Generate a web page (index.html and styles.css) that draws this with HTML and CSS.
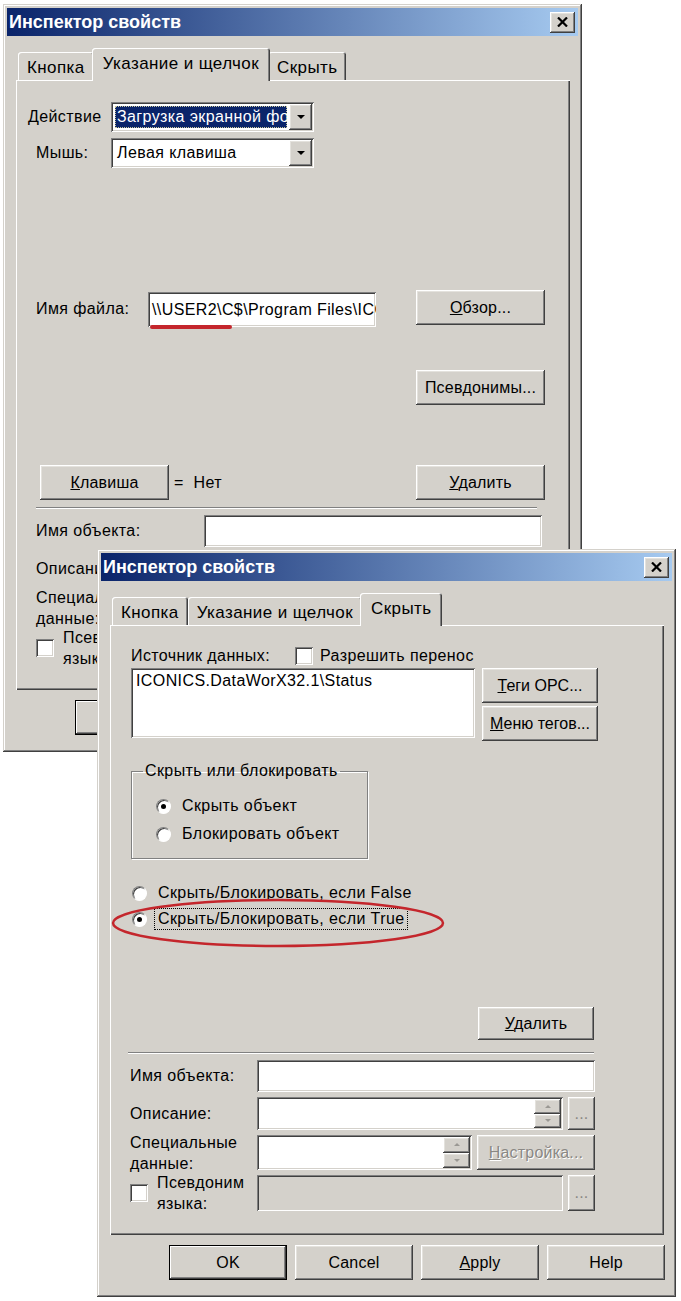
FILE: index.html
```html
<!DOCTYPE html>
<html lang="ru">
<head>
    <meta charset="utf-8">
    <title>Инспектор свойств</title>
    <link rel="stylesheet" href="styles.css">
</head>
<body>
<div class="desktop">

    <div class="window window-back">
        <div class="titlebar">
            <span class="title">Инспектор свойств</span>
            <span class="close-btn"><svg width="11" height="10" viewBox="0 0 11 10"><path d="M1 0.5 L10 9.5 M10 0.5 L1 9.5" stroke="#000" stroke-width="2.2"/></svg></span>
        </div>
        <div class="tabs">
            <span class="tab">Кнопка</span>
            <span class="tab active">Указание и щелчок</span>
            <span class="tab">Скрыть</span>
        </div>
        <div class="panel">
            <div class="page page-click">
                <div class="row row-combo">
                    <span class="label">Действие</span>
                    <div class="field combo">
                        <span class="combo-text selected">Загрузка экранной формы</span>
                        <span class="combo-btn"><span class="arrow-down"></span></span>
                    </div>
                </div>
                <div class="row row-combo row-mouse">
                    <span class="label">Мышь:</span>
                    <div class="field combo">
                        <span class="combo-text">Левая клавиша</span>
                        <span class="combo-btn"><span class="arrow-down"></span></span>
                    </div>
                </div>
                <div class="row row-file">
                    <span class="label">Имя файла:</span>
                    <div class="field input-file">\\USER2\C$\Program Files\ICONICS</div>
                    <button class="btn btn-wide btn-browse"><u>О</u>бзор...</button>
                </div>
                <div class="row row-aliases">
                    <button class="btn btn-wide">Псевдонимы...</button>
                </div>
                <div class="row row-key">
                    <button class="btn btn-wide"><u>К</u>лавиша</button>
                    <span class="key-value">=&nbsp;&nbsp;Нет</span>
                    <button class="btn btn-wide btn-push"><u>У</u>далить</button>
                </div>
            </div>
            <div class="separator"></div>
            <div class="common">
                <span class="label">Имя объекта:</span>
                <div class="field"></div>

                <span class="label">Описание:</span>
                <div class="field-group">
                    <div class="field spin-field">
                        <span class="spinner">
                            <span class="spin-btn"><span class="arrow-tiny-up"></span></span>
                            <span class="spin-btn"><span class="arrow-tiny-down"></span></span>
                        </span>
                    </div>
                    <button class="btn btn-dots">...</button>
                </div>

                <span class="label two-lines">Специальные<br>данные:</span>
                <div class="field-group">
                    <div class="field spin-field field-short">
                        <span class="spinner">
                            <span class="spin-btn"><span class="arrow-tiny-up"></span></span>
                            <span class="spin-btn"><span class="arrow-tiny-down"></span></span>
                        </span>
                    </div>
                    <button class="btn btn-setup" disabled><u>Н</u>астройка...</button>
                </div>

                <label class="label two-lines check-label"><span class="checkbox"></span><span>Псевдоним<br>языка:</span></label>
                <div class="field-group">
                    <div class="field field-disabled"></div>
                    <button class="btn btn-dots">...</button>
                </div>
            </div>
        </div>
        <div class="footer">
            <button class="btn btn-footer btn-default">OK</button>
            <button class="btn btn-footer">Cancel</button>
            <button class="btn btn-footer"><u>A</u>pply</button>
            <button class="btn btn-footer">Help</button>
        </div>
    </div>

    <div class="window window-front">
        <div class="titlebar">
            <span class="title">Инспектор свойств</span>
            <span class="close-btn"><svg width="11" height="10" viewBox="0 0 11 10"><path d="M1 0.5 L10 9.5 M10 0.5 L1 9.5" stroke="#000" stroke-width="2.2"/></svg></span>
        </div>
        <div class="tabs">
            <span class="tab">Кнопка</span>
            <span class="tab">Указание и щелчок</span>
            <span class="tab active">Скрыть</span>
        </div>
        <div class="panel">
            <div class="page page-hide">
                <div class="row row-source">
                    <span class="label">Источник данных:</span>
                    <label class="check"><span class="checkbox"></span>Разрешить перенос</label>
                </div>
                <div class="row row-list">
                    <div class="field listbox">ICONICS.DataWorX32.1\Status</div>
                    <div class="stack">
                        <button class="btn btn-tag"><u>Т</u>еги OPC...</button>
                        <button class="btn btn-tag"><u>М</u>еню тегов...</button>
                    </div>
                </div>
                <fieldset class="group">
                    <legend>Скрыть или блокировать</legend>
                    <label class="option"><span class="radio checked"></span><span class="option-text">Скрыть объект</span></label>
                    <label class="option"><span class="radio"></span><span class="option-text">Блокировать объект</span></label>
                </fieldset>
                <div class="options">
                    <label class="option"><span class="radio"></span><span class="option-text">Скрыть/Блокировать, если False</span></label>
                    <label class="option"><span class="radio checked"></span><span class="option-text focus">Скрыть/Блокировать, если True</span></label>
                </div>
                <div class="row row-delete">
                    <button class="btn btn-del"><u>У</u>далить</button>
                </div>
            </div>
            <div class="separator"></div>
            <div class="common">
                <span class="label">Имя объекта:</span>
                <div class="field"></div>

                <span class="label">Описание:</span>
                <div class="field-group">
                    <div class="field spin-field">
                        <span class="spinner">
                            <span class="spin-btn"><span class="arrow-tiny-up"></span></span>
                            <span class="spin-btn"><span class="arrow-tiny-down"></span></span>
                        </span>
                    </div>
                    <button class="btn btn-dots">...</button>
                </div>

                <span class="label two-lines">Специальные<br>данные:</span>
                <div class="field-group">
                    <div class="field spin-field field-short">
                        <span class="spinner">
                            <span class="spin-btn"><span class="arrow-tiny-up"></span></span>
                            <span class="spin-btn"><span class="arrow-tiny-down"></span></span>
                        </span>
                    </div>
                    <button class="btn btn-setup" disabled><u>Н</u>астройка...</button>
                </div>

                <label class="label two-lines check-label"><span class="checkbox"></span><span>Псевдоним<br>языка:</span></label>
                <div class="field-group">
                    <div class="field field-disabled"></div>
                    <button class="btn btn-dots">...</button>
                </div>
            </div>
        </div>
        <div class="footer">
            <button class="btn btn-footer btn-default">OK</button>
            <button class="btn btn-footer">Cancel</button>
            <button class="btn btn-footer"><u>A</u>pply</button>
            <button class="btn btn-footer">Help</button>
        </div>
    </div>

    <span class="mark-underline"></span>
    <svg class="mark-ellipse" width="340" height="56" viewBox="0 0 340 56">
        <ellipse cx="170" cy="27" rx="165" ry="23" fill="none" stroke="#c4262c" stroke-width="2.5"/>
    </svg>

</div>
</body>
</html>
```

FILE: styles.css
```css
* {
    box-sizing: border-box;
    font-family: "Liberation Sans", Arial, sans-serif;
}

body {
    margin: 0;
    background-color: #ffffff;
    font-size: 16px;
    letter-spacing: 0.4px;
    color: #000000;
}

.desktop {
    position: relative;
    width: 681px;
    height: 1301px;
    overflow: hidden;
}

.window {
    position: absolute;
    width: 579px;
    height: 748px;
    padding: 4px;
    display: flex;
    flex-direction: column;
    background-color: #d4d1cb;
    box-shadow: inset -1px -1px #404040, inset 1px 1px #d4d1cb, inset -2px -2px #808080, inset 2px 2px #ffffff;
}

.window-back {
    left: 3px;
    top: 4px;
}

.window-front {
    left: 97px;
    top: 549px;
    z-index: 2;
}

.titlebar {
    flex: none;
    height: 28px;
    padding: 0 3px 0 2px;
    display: flex;
    align-items: center;
    justify-content: space-between;
    background: linear-gradient(90deg, #0a246a, #a6caf0);
}

.title {
    color: #ffffff;
    font-size: 18px;
    font-weight: bold;
    letter-spacing: 0;
}

.btn,
.close-btn,
.combo-btn,
.spin-btn {
    background-color: #d4d1cb;
    box-shadow: inset -1px -1px #404040, inset 1px 1px #ffffff, inset -2px -2px #808080, inset 2px 2px #e4e2dd;
}

.close-btn {
    width: 25px;
    height: 21px;
    display: flex;
    align-items: center;
    justify-content: center;
}

/* tabs */

.tabs {
    position: relative;
    z-index: 1;
    flex: none;
    height: 32px;
    margin: 12px 0 0 11px;
    display: flex;
    align-items: flex-end;
}

.tab {
    height: 28px;
    padding: 3px 9px 0;
    display: flex;
    align-items: center;
    white-space: nowrap;
    font-size: 17px;
    border-radius: 3px 3px 0 0;
    background-color: #d4d1cb;
    box-shadow: inset 1px 1px #ffffff, inset -1px 0 #404040, inset -2px 0 #808080;
}

.tab.active {
    position: relative;
    z-index: 1;
    height: 33px;
    margin: 0 -2px -1px;
    padding: 0 11px 2px;
}

.panel {
    flex: none;
    height: 610px;
    margin: 0 8px 0 9px;
    padding-top: 22px;
    display: flex;
    flex-direction: column;
    box-shadow: inset 1px 1px #ffffff, inset -1px -1px #404040, inset -2px -2px #808080;
}

.page {
    flex: none;
    height: 405px;
    display: flex;
    flex-direction: column;
}

.row {
    display: flex;
    align-items: center;
}

.label {
    white-space: nowrap;
}

/* fields */

.field {
    background-color: #ffffff;
    box-shadow: inset 1px 1px #808080, inset -1px -1px #ffffff, inset 2px 2px #404040, inset -2px -2px #d4d1cb;
}

.btn {
    border: none;
    padding: 0;
    font-size: 16px;
    letter-spacing: 0.2px;
    white-space: nowrap;
    color: #000000;
}

.btn:disabled {
    color: #8a8884;
    text-shadow: 1px 1px #ffffff;
}

.combo {
    width: 203px;
    height: 30px;
    padding: 2px;
    display: flex;
}

.combo-text {
    flex: 1;
    margin: 2px;
    padding-left: 2px;
    overflow: hidden;
    white-space: nowrap;
    line-height: 22px;
}

.combo-text.selected {
    background-color: #0a246a;
    color: #ffffff;
    outline: 1px dotted #c9c79a;
    outline-offset: -1px;
}

.combo-btn {
    width: 23px;
    display: flex;
    align-items: center;
    justify-content: center;
}

.arrow-down {
    border-left: 4px solid transparent;
    border-right: 4px solid transparent;
    border-top: 4px solid #000000;
}

.arrow-tiny-up {
    border-left: 3px solid transparent;
    border-right: 3px solid transparent;
    border-bottom: 3px solid #9a9893;
}

.arrow-tiny-down {
    border-left: 3px solid transparent;
    border-right: 3px solid transparent;
    border-top: 3px solid #9a9893;
}

.checkbox {
    flex: none;
    width: 18px;
    height: 18px;
    background-color: #ffffff;
    box-shadow: inset 1px 1px #808080, inset -1px -1px #ffffff, inset 2px 2px #404040, inset -2px -2px #d4d1cb;
}

.radio {
    position: relative;
    flex: none;
    width: 15px;
    height: 15px;
    border-radius: 50%;
    border: 1px solid;
    border-color: #808080 #ffffff #ffffff #808080;
    background-color: #ffffff;
    box-shadow: inset 1px 1px #404040;
}

.radio.checked::after {
    content: "";
    position: absolute;
    left: 4px;
    top: 4px;
    width: 5px;
    height: 5px;
    border-radius: 50%;
    background-color: #000000;
}

/* page "click" */

.row-combo {
    height: 30px;
    padding-left: 12px;
}

.row-combo .label {
    width: 83px;
}

.row-mouse {
    margin-top: 6px;
    padding-left: 20px;
}

.row-mouse .label {
    width: 75px;
}

.row-file {
    height: 37px;
    margin-top: 122px;
    padding-left: 20px;
}

.row-file .label {
    width: 112px;
}

.input-file {
    align-self: flex-end;
    width: 228px;
    height: 35px;
    padding: 0 4px;
    overflow: hidden;
    white-space: nowrap;
    line-height: 35px;
}

.btn-wide {
    width: 129px;
    height: 35px;
}

.btn-browse {
    align-self: flex-start;
    margin-left: 40px;
}

.row-aliases {
    margin-top: 43px;
    padding-right: 25px;
    justify-content: flex-end;
}

.row-key {
    margin-top: auto;
    margin-bottom: 7px;
    padding: 0 25px 0 24px;
}

.key-value {
    margin-left: 5px;
}

.btn-push {
    margin-left: auto;
}

/* page "hide" */

.row-source {
    height: 18px;
    padding-left: 21px;
}

.row-source .label {
    margin-right: 25px;
}

.check {
    display: flex;
    align-items: center;
    gap: 7px;
    white-space: nowrap;
}

.row-list {
    margin-top: 3px;
    padding-left: 21px;
    align-items: flex-start;
}

.listbox {
    width: 344px;
    height: 70px;
    padding: 4px 5px;
    white-space: nowrap;
}

.stack {
    margin-left: 7px;
    display: flex;
    flex-direction: column;
    gap: 3px;
}

.btn-tag {
    width: 116px;
    height: 35px;
    letter-spacing: 0;
}

.group {
    width: 237px;
    height: 98px;
    margin: 20px 0 0 21px;
    padding: 11px 0 0 11px;
    border: 1px solid #808080;
    box-shadow: inset 1px 1px #ffffff, 1px 1px #ffffff;
}

.group legend {
    padding: 0 2px;
    line-height: 20px;
}

.option {
    display: flex;
    align-items: center;
    gap: 8px;
    white-space: nowrap;
}

.option-text {
    padding: 1px 3px;
}

.option-text.focus {
    outline: 1px dotted #000000;
}

.group .option {
    height: 28px;
    padding-left: 13px;
}

.options {
    margin-top: 21px;
    padding-left: 22px;
}

.options .option {
    height: 26px;
}

.row-delete {
    margin-top: auto;
    margin-bottom: 12px;
    padding-right: 70px;
    justify-content: flex-end;
}

.btn-del {
    width: 116px;
    height: 33px;
}

/* common part */

.separator {
    flex: none;
    height: 2px;
    border-top: 1px solid #808080;
    border-bottom: 1px solid #ffffff;
}

.window-back .separator {
    margin: 0 33px 0 20px;
}

.window-front .separator {
    margin: 0 70px 0 18px;
}

.common {
    margin-top: 6px;
    padding-left: 20px;
    display: grid;
    grid-template-columns: 127px 338px;
    grid-template-rows: 32px 33px 35px 36px;
    row-gap: 5px;
    align-items: center;
}

.window-back .common {
    grid-template-columns: 168px 338px;
}

.common .field,
.field-group {
    height: 100%;
}

.field-group {
    display: flex;
    gap: 5px;
}

.spin-field {
    flex: 1;
    padding: 2px;
    display: flex;
    justify-content: flex-end;
}

.field-short {
    flex: none;
    width: 215px;
}

.spinner {
    width: 27px;
    display: flex;
    flex-direction: column;
}

.spin-btn {
    flex: 1;
    display: flex;
    align-items: center;
    justify-content: center;
}

.btn-dots {
    flex: none;
    width: 27px;
    color: #8a8884;
}

.btn-setup {
    flex: 1;
}

.field-disabled {
    flex: 1;
    background-color: #d4d1cb;
}

.two-lines {
    line-height: 21px;
}

.check-label {
    display: flex;
    align-items: center;
    gap: 9px;
}

/* buttons row */

.footer {
    flex: none;
    margin: 10px 7px 0 0;
    display: flex;
    justify-content: flex-end;
    gap: 8px;
}

.btn-footer {
    width: 118px;
    height: 35px;
}

.btn-default {
    box-shadow: inset 0 0 0 1px #000000, inset -2px -2px #404040, inset 2px 2px #ffffff, inset -3px -3px #808080;
}

/* red marks */

.mark-underline {
    position: absolute;
    left: 150px;
    top: 325px;
    z-index: 3;
    width: 82px;
    height: 4px;
    border-radius: 2px;
    background-color: #c4262c;
}

.mark-ellipse {
    position: absolute;
    left: 108px;
    top: 896px;
    z-index: 3;
}
```
